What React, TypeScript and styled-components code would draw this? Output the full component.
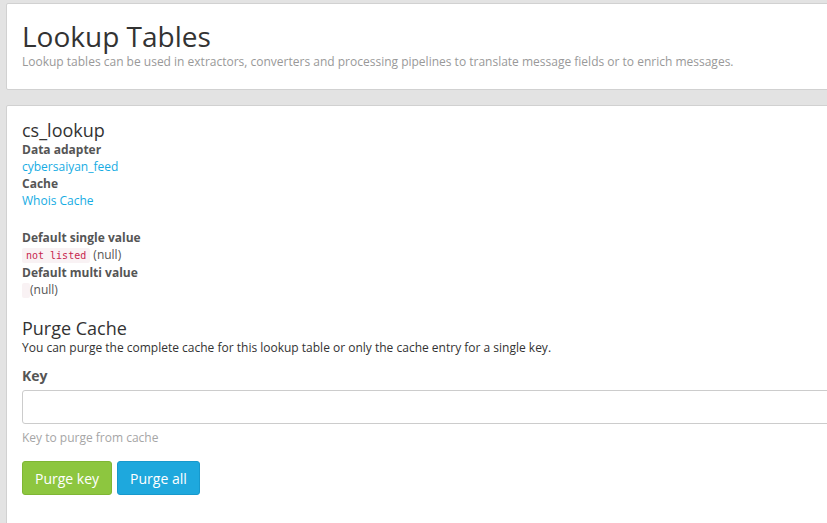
import React from "react";
import styled, { createGlobalStyle } from "styled-components";

const Global = createGlobalStyle`
  html, body { margin: 0; padding: 0; overflow: hidden; }
  body {
    background: #e3e3e3;
    font-family: "Open Sans", "DejaVu Sans", sans-serif;
    font-size: 12px;
    color: #333;
  }
`;

const Page = styled.div`
  padding: 3px 0 0 6px;
  width: calc(100vw + 60px);
  display: flex;
  flex-direction: column;
  gap: 15px;
`;

const Panel = styled.section<{ $grow?: boolean }>`
  background: #fff;
  border: 1px solid #d1d1d1;
  border-radius: 2px;
  padding: ${(p) => (p.$grow ? "13px 15px 40px" : "15px 15px 19px")};
`;

const Title = styled.h1`
  margin: 0;
  font-size: 28px;
  font-weight: 400;
  line-height: 34px;
  color: #333;
`;

const Lead = styled.p`
  margin: 0;
  font-size: 12px;
  line-height: 17px;
  color: #999;
`;

const Heading = styled.h2<{ $top?: number }>`
  margin: ${(p) => p.$top ?? 0}px 0 0;
  font-size: 18px;
  font-weight: 400;
  line-height: 22px;
  color: #333;
`;

const Dl = styled.dl`
  margin: 0;
`;

const Dt = styled.dt<{ $gap?: boolean }>`
  font-weight: 700;
  line-height: 17px;
  color: #555;
  margin-top: ${(p) => (p.$gap ? "20px" : "0")};
`;

const Dd = styled.dd`
  margin: 0;
  line-height: 17px;
  color: #555;
`;

const Link = styled.a`
  color: #16ace3;
  text-decoration: none;
`;

const Code = styled.code`
  font-family: "DejaVu Sans Mono", "Liberation Mono", monospace;
  font-size: 10px;
  color: #c7254e;
  background: #f9f2f4;
  padding: 2px 4px;
  border-radius: 2px;
`;

const Text = styled.p`
  margin: 0;
  line-height: 17px;
`;

const Label = styled.label`
  display: block;
  margin-top: 10px;
  font-weight: 700;
  font-size: 14px;
  line-height: 20px;
  color: #555;
`;

const Input = styled.input`
  display: block;
  box-sizing: border-box;
  margin-top: 4px;
  width: 100%;
  height: 34px;
  border: 1px solid #ccc;
  border-radius: 3px;
  font-family: inherit;
  font-size: 12px;
  padding: 6px 12px;
`;

const Help = styled.p`
  margin: 5px 0 0;
  line-height: 17px;
  color: #a6a6a6;
`;

const Actions = styled.div`
  display: flex;
  gap: 5px;
  margin-top: 15px;
`;

const Button = styled.button<{ $tone: "green" | "blue" }>`
  height: 34px;
  padding: 0 12px;
  border: 1px solid ${(p) => (p.$tone === "green" ? "#7fb634" : "#1799cc")};
  border-radius: 3px;
  background: ${(p) => (p.$tone === "green" ? "#8dc63f" : "#1ea8dd")};
  color: #fff;
  font-family: inherit;
  font-size: 14px;
`;

export default function App() {
  return (
    <>
      <Global />
      <Page>
        <Panel>
          <Title>Lookup Tables</Title>
          <Lead>
            Lookup tables can be used in extractors, converters and processing pipelines to
            translate message fields or to enrich messages.
          </Lead>
        </Panel>
        <Panel $grow>
          <Heading>cs_lookup</Heading>
          <Dl>
            <Dt>Data adapter</Dt>
            <Dd>
              <Link href="#">cybersaiyan_feed</Link>
            </Dd>
            <Dt>Cache</Dt>
            <Dd>
              <Link href="#">Whois Cache</Link>
            </Dd>
          </Dl>
          <Dl>
            <Dt $gap>Default single value</Dt>
            <Dd>
              <Code>not listed</Code> (null)
            </Dd>
            <Dt>Default multi value</Dt>
            <Dd>
              <Code></Code> (null)
            </Dd>
          </Dl>
          <Heading $top={18}>Purge Cache</Heading>
          <Text>
            You can purge the complete cache for this lookup table or only the cache entry for a
            single key.
          </Text>
          <Label htmlFor="key">Key</Label>
          <Input id="key" type="text" />
          <Help>Key to purge from cache</Help>
          <Actions>
            <Button $tone="green">Purge key</Button>
            <Button $tone="blue">Purge all</Button>
          </Actions>
        </Panel>
      </Page>
    </>
  );
}
